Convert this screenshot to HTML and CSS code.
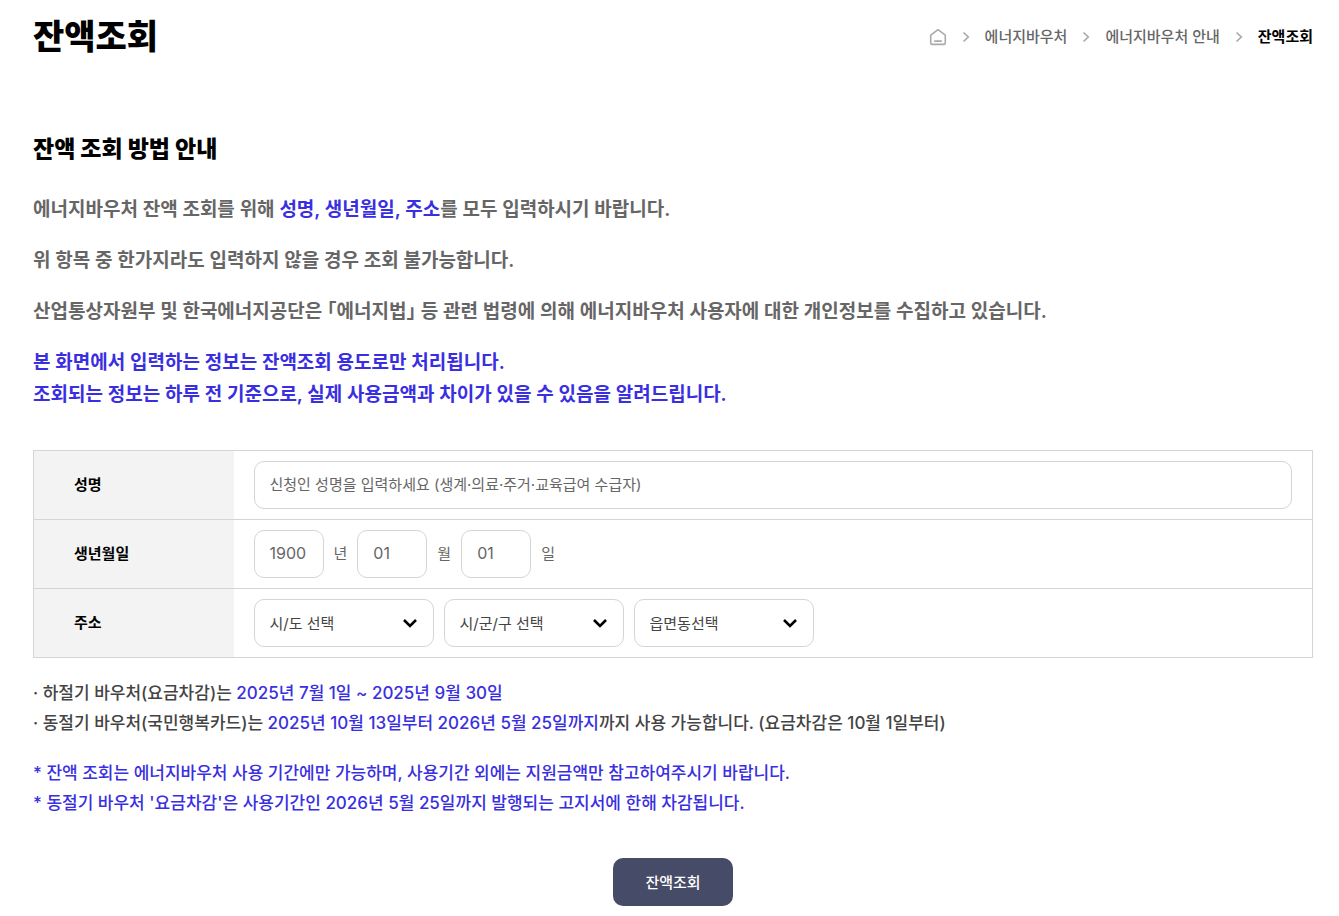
FILE: index.html
```
<!DOCTYPE html>
<html lang="ko">
<head>
    <meta charset="UTF-8">
    <meta name="viewport" content="width=device-width, initial-scale=1.0">
    <title>잔액조회</title>
    <link rel="stylesheet" href="styles.css">
</head>
<body>
    <header class="page-header">
        <h1>잔액조회</h1>
        <nav class="breadcrumb" aria-label="현재 위치">
            <a href="#" class="home" aria-label="홈">
                <svg width="18" height="18" viewBox="0 0 18 18" fill="none" stroke="#aaa" stroke-width="1.6" stroke-linecap="round" stroke-linejoin="round">
                    <path d="M1.7 7.2 L9 1.7 L16.3 7.2 V15 Q16.3 16.4 14.9 16.4 H3.1 Q1.7 16.4 1.7 15 Z"/>
                    <path d="M5.7 13.1 H12.3"/>
                </svg>
            </a>
            <svg class="arrow" width="8" height="12" viewBox="0 0 8 12"><path d="M1.5 1.5 L6.3 6 L1.5 10.5"/></svg>
            <a href="#">에너지바우처</a>
            <svg class="arrow" width="8" height="12" viewBox="0 0 8 12"><path d="M1.5 1.5 L6.3 6 L1.5 10.5"/></svg>
            <a href="#">에너지바우처 안내</a>
            <svg class="arrow" width="8" height="12" viewBox="0 0 8 12"><path d="M1.5 1.5 L6.3 6 L1.5 10.5"/></svg>
            <a href="#" class="current" aria-current="page">잔액조회</a>
        </nav>
    </header>

    <main>
        <h2>잔액 조회 방법 안내</h2>
        <div class="guide">
            <p>에너지바우처 잔액 조회를 위해 <span class="point">성명, 생년월일, 주소</span>를 모두 입력하시기 바랍니다.</p>
            <p>위 항목 중 한가지라도 입력하지 않을 경우 조회 불가능합니다.</p>
            <p>산업통상자원부 및 한국에너지공단은 ｢에너지법｣ 등 관련 법령에 의해 에너지바우처 사용자에 대한 개인정보를 수집하고 있습니다.</p>
            <p class="point">본 화면에서 입력하는 정보는 잔액조회 용도로만 처리됩니다.<br>조회되는 정보는 하루 전 기준으로, 실제 사용금액과 차이가 있을 수 있음을 알려드립니다.</p>
        </div>

        <form>
            <table class="form-table">
                <tbody>
                    <tr>
                        <th scope="row"><label for="name">성명</label></th>
                        <td><input type="text" id="name" class="full" placeholder="신청인 성명을 입력하세요 (생계·의료·주거·교육급여 수급자)"></td>
                    </tr>
                    <tr>
                        <th scope="row"><label for="birth-year">생년월일</label></th>
                        <td>
                            <div class="fields">
                                <input type="text" id="birth-year" class="date" placeholder="1900" maxlength="4">
                                <label for="birth-year">년</label>
                                <input type="text" id="birth-month" class="date" placeholder="01" maxlength="2">
                                <label for="birth-month">월</label>
                                <input type="text" id="birth-day" class="date" placeholder="01" maxlength="2">
                                <label for="birth-day">일</label>
                            </div>
                        </td>
                    </tr>
                    <tr>
                        <th scope="row"><label for="sido">주소</label></th>
                        <td>
                            <div class="fields">
                                <select id="sido"><option>시/도 선택</option></select>
                                <select id="sigungu" aria-label="시/군/구"><option>시/군/구 선택</option></select>
                                <select id="dong" aria-label="읍면동"><option>읍면동선택</option></select>
                            </div>
                        </td>
                    </tr>
                </tbody>
            </table>

            <div class="notes">
                <p>· 하절기 바우처(요금차감)는 <span class="point">2025년 7월 1일 ~ 2025년 9월 30일</span><br>· 동절기 바우처(국민행복카드)는 <span class="point">2025년 10월 13일부터 2026년 5월 25일까지</span>까지 사용 가능합니다. (요금차감은 10월 1일부터)</p>
                <p class="point">* 잔액 조회는 에너지바우처 사용 기간에만 가능하며, 사용기간 외에는 지원금액만 참고하여주시기 바랍니다.<br>* 동절기 바우처 '요금차감'은 사용기간인 2026년 5월 25일까지 발행되는 고지서에 한해 차감됩니다.</p>
            </div>

            <div class="buttons">
                <button type="button">잔액조회</button>
            </div>
        </form>
    </main>
</body>
</html>
```
FILE: styles.css
```
* {
    box-sizing: border-box;
}

body {
    margin: 0;
    padding: 11px 26px 10px 33px;
    font-family: 'Inter', 'Noto Sans CJK KR', sans-serif;
    font-size: 15px;
    color: #000;
    background-color: #fff;
}

h1, h2, p {
    margin: 0;
}

a {
    color: inherit;
    text-decoration: none;
}

.page-header {
    display: flex;
    justify-content: space-between;
    align-items: center;
}

h1 {
    font-size: 34px;
    font-weight: 800;
    line-height: 52px;
}

.breadcrumb {
    display: flex;
    align-items: center;
    gap: 15px;
    font-weight: 500;
    line-height: 24px;
    color: #666;
}

.breadcrumb .home {
    display: flex;
}

.breadcrumb .arrow {
    fill: none;
    stroke: #aaa;
    stroke-width: 1.7;
}

.breadcrumb .current {
    color: #000;
    font-weight: 600;
}

h2 {
    margin-top: 68px;
    font-size: 23px;
    font-weight: 800;
    line-height: 36px;
}

.guide {
    display: flex;
    flex-direction: column;
    gap: 19px;
    margin-top: 27px;
    font-size: 19px;
    font-weight: 600;
    line-height: 32px;
    color: #666;
}

.guide .point,
.notes .point {
    color: #3a2fe0;
}

.form-table {
    width: 100%;
    margin-top: 39px;
    border-collapse: collapse;
    border: 1px solid #d5d5d5;
}

.form-table tr {
    border-bottom: 1px solid #d5d5d5;
}

.form-table th {
    width: 200px;
    padding: 0 40px 4px;
    background-color: #f3f3f3;
    font-weight: 600;
    text-align: left;
}

.form-table td {
    padding: 10px 20px;
    color: #666;
}

.fields {
    display: flex;
    align-items: center;
    gap: 10px;
}

.fields label {
    padding-bottom: 4px;
}

input,
select {
    display: block;
    height: 48px;
    padding: 0 15px;
    border: 1px solid #d5d5d5;
    border-radius: 10px;
    background-color: #fff;
    font-family: inherit;
    font-size: 15px;
    color: #444;
}

input {
    padding-bottom: 2px;
}

input::placeholder {
    color: #666;
}

.full {
    width: 100%;
}

.date {
    width: 70px;
    font-size: 16px;
}

select {
    width: 180px;
    appearance: none;
    background-image: url("data:image/svg+xml,%3Csvg xmlns='http://www.w3.org/2000/svg' width='16' height='10' viewBox='0 0 16 10'%3E%3Cpath d='M2 2L8 8L14 2' fill='none' stroke='%23000' stroke-width='2.6'/%3E%3C/svg%3E");
    background-repeat: no-repeat;
    background-position: right 15px center;
}

.notes {
    display: flex;
    flex-direction: column;
    gap: 20px;
    margin-top: 20px;
    font-size: 17px;
    font-weight: 500;
    line-height: 30px;
    color: #444;
}

.buttons {
    display: flex;
    justify-content: center;
    margin-top: 40px;
}

button {
    width: 120px;
    height: 48px;
    padding: 0 0 2px;
    border: none;
    border-radius: 10px;
    background-color: #464c68;
    color: #fff;
    font-family: inherit;
    font-size: 15px;
    font-weight: 500;
    cursor: pointer;
}
```
